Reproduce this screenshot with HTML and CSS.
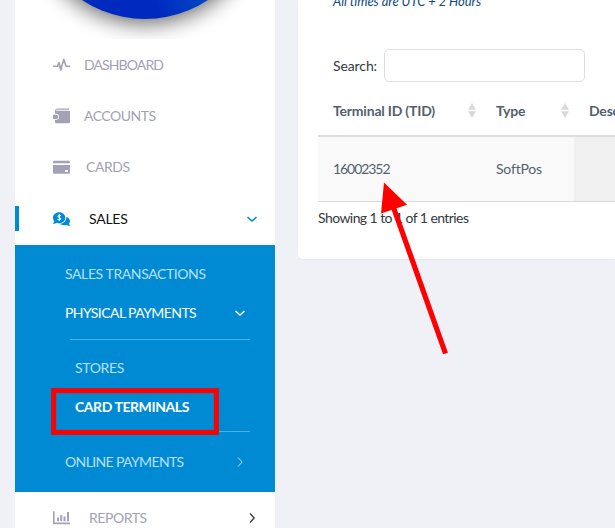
FILE: index.html
```html
<!DOCTYPE html>
<html lang="en">
<head>
<meta charset="utf-8">
<title>Card Terminals</title>
<link rel="stylesheet" href="styles.css">
</head>
<body>
<div class="layout">
  <aside class="sidebar">
    <div class="brand">
      <svg width="260" height="39" viewBox="0 0 260 39">
        <defs>
          <linearGradient id="ball" gradientUnits="userSpaceOnUse" x1="125" y1="10" x2="205" y2="-25"><stop offset=".2" stop-color="#002abf"/><stop offset="1" stop-color="#0057c9"/></linearGradient>
          <filter id="soft" filterUnits="userSpaceOnUse" x="-50" y="-270" width="360" height="360"><feGaussianBlur stdDeviation="11"/></filter>
        </defs>
        <circle cx="130" cy="-91" r="114" fill="#000" opacity=".62" filter="url(#soft)"/>
        <circle cx="130" cy="-95" r="114" fill="url(#ball)"/>
      </svg>
    </div>
    <nav>
      <a class="item dashboard"><svg class="icon" viewBox="0 0 18 16"><path d="M0 9.200H4.500L6 5.500 7.700 13 10.800 2.200 13 9.200H17" fill="none" stroke="currentColor" stroke-width="1.600" stroke-linejoin="round"/></svg><span class="label">DASHBOARD</span></a>
      <a class="item accounts"><svg class="icon" viewBox="0 0 18 16"><path d="M2.500 1.500 4 .500h12v1.200H3.200v1.100H16q1 0 1 1V14q0 1.300-1.300 1.300H3.500Q2 15.300 2 14v-2.200h1a3 3 0 0 0 0-6H2V2.500z" fill="currentColor"/><path d="M0 6.800h3.200a2.100 2.100 0 0 1 0 4.200H0z" fill="currentColor"/></svg><span class="label">ACCOUNTS</span></a>
      <a class="item cards"><svg class="icon" viewBox="0 0 18 16"><path d="M1.500 1.800h14Q17 1.800 17 3.200v1H0v-1q0-1.400 1.500-1.400zM0 6h17v7.200q0 1.500-1.500 1.500h-14Q0 14.700 0 13.200zm12 5v2h3v-2z" fill="currentColor" fill-rule="evenodd"/></svg><span class="label">CARDS</span></a>
      <a class="item sales"><svg class="icon" viewBox="0 0 18 16"><path d="M6.200 1.200c3.400 0 6.100 2.400 6.100 5.500s-2.700 5.500-6.100 5.500q-1.500 0-2.700-.5Q2 13 0 13q1.200-1.300 1.200-2.800Q0 8.700 0 6.700c0-3.100 2.800-5.500 6.200-5.500z" fill="currentColor"/><path d="M13.300 6c2.200.5 3.700 2.100 3.700 4.100q0 1.400-.9 2.500.1 1.300 1 2.300-2 0-3.300-1-1.200.4-2.400.4-2.900 0-4.300-1.500c3.500-.3 6.400-2.900 6.200-6.800z" fill="currentColor"/><path d="M8 4.700q-3-1.200-3.200.4c0 1.800 3.100 1 3 2.800Q7.600 9.600 4.500 8.500M6.300 3v7" fill="none" stroke="#fff" stroke-width="1"/></svg><span class="label">SALES</span><svg class="caret" viewBox="0 0 12 12"><path d="m1.500 4 4.500 4 4.500-4" /></svg></a>
      <div class="submenu">
        <a class="sub transactions"><span class="label">SALES TRANSACTIONS</span></a>
        <a class="sub open physical"><span class="label">PHYSICAL PAYMENTS</span><svg class="caret" viewBox="0 0 12 12"><path d="m1.500 4 4.500 4 4.500-4"/></svg></a>
        <div class="nested">
          <a class="sub stores"><span class="label">STORES</span></a>
          <a class="sub terminals"><span class="label">CARD TERMINALS</span></a>
        </div>
        <a class="sub online"><span class="label">ONLINE PAYMENTS</span><svg class="caret" viewBox="0 0 12 12"><path d="m4 1.500 4.200 4.500L4 10.500"/></svg></a>
      </div>
      <a class="item reports"><svg class="icon" viewBox="0 0 18 16"><path d="M.8 1.200v12.200H17" fill="none" stroke="currentColor" stroke-width="1.600"/><path d="M5 7.500v3.800M8.200 5v6.300M11.500 6.500v4.800M15 2v9.300" fill="none" stroke="currentColor" stroke-width="2"/></svg><span class="label">REPORTS</span><svg class="caret" viewBox="0 0 12 12"><path d="m4 1.500 4.200 4.500L4 10.500"/></svg></a>
    </nav>
  </aside>
  <main class="panel">
    <p class="note"><span>All times are UTC + 2 Hours</span></p>
    <label class="search"><span class="search-text">Search:</span><input type="text"></label>
    <div class="table">
      <div class="row head">
        <div class="cell"><span class="tid">Terminal ID (TID)</span><svg class="sort" viewBox="0 0 8 15"><path d="M0 6.700 4 0l4 6.700zM0 8.300h8L4 15z"/></svg></div>
        <div class="cell"><span class="type">Type</span><svg class="sort" viewBox="0 0 8 15"><path d="M0 6.700 4 0l4 6.700zM0 8.300h8L4 15z"/></svg></div>
        <div class="cell"><span class="desc">Description</span></div>
      </div>
      <div class="row body">
        <div class="cell"><span class="number">16002352</span></div>
        <div class="cell"><span class="pos">SoftPos</span></div>
        <div class="cell sorted"></div>
      </div>
    </div>
    <p class="info"><span>Showing 1 to 1 of 1 entries</span></p>
  </main>
</div>
<div class="highlight"></div>
<svg class="arrow" width="80" height="180" viewBox="375 178 80 180"><path d="m445.500 353.500-52-146" stroke="#f00" stroke-width="5.200"/><path d="m384 182.500 23 22.300-26 8.700z" fill="#f00"/></svg>
</body>
</html>
```
FILE: styles.css
```css
* { box-sizing: border-box; }
body {
  margin: 0;
  height: 528px;
  overflow: hidden;
  background: #f0f1f6;
  font: 14px/20px Lato, "Open Sans", sans-serif;
  color: #343a40;
}
.layout { display: flex; align-items: flex-start; gap: 23px; padding-left: 15px; height: 528px; overflow: hidden; }
.sidebar { flex: 0 0 260px; height: 528px; overflow: hidden; background: #fff; }
.brand { height: 39px; overflow: hidden; }
.brand svg { display: block; }
.label { white-space: nowrap; }
.item { display: flex; align-items: center; height: 51px; padding: 0 17px 0 38px; color: #a2a1b5; }
.icon { width: 18px; height: 16px; flex: none; margin-right: 13px; }
.cards .icon { margin-right: 15px; }
.sales .icon, .reports .icon { margin-right: 18px; }
.caret { width: 12px; height: 12px; margin-left: auto; fill: none; stroke: currentColor; stroke-width: 1.6; }
.item.sales {
  height: 53px;
  color: #008ad4;
  background: linear-gradient(#008ad4, #008ad4) 0 14px / 4px 25px no-repeat;
}
.sales .label { color: #111; }
.reports .caret { color: #333; stroke-width: 1.2; }
.submenu { height: 247px; padding: 9px 25px 0 50px; background: #008ad4; color: #b9e0f4; }
.sub { display: flex; align-items: center; height: 39px; }
.submenu > .sub { padding-right: 4px; }
.sub.open, .terminals { color: #fff; }
.terminals { font-weight: 700; }
.online .caret { stroke-width: 1; }
.nested { margin: 7px 0 10px 5px; padding: 8px 5px 5px; height: 93px; border: solid #4db0e3; border-width: 1px 0; }
.online { height: 40px; }

.dashboard .label { letter-spacing: -.88px; }
.accounts .label { letter-spacing: -.5px; }
.cards .label { letter-spacing: -.45px; }
.sales .label { letter-spacing: -.25px; }
.transactions .label { letter-spacing: -.4px; }
.physical .label { letter-spacing: -.57px; }
.stores .label { letter-spacing: -.35px; }
.terminals .label { letter-spacing: -.43px; }
.online .label { letter-spacing: -.62px; }
.reports .label { letter-spacing: -.45px; }

.panel { flex: 1; min-width: 0; height: 259px; overflow: hidden; padding: 0 0 0 20px; background: #fff; border-radius: 0 0 0 5px; box-shadow: 0 1px 3px #0000000a; }
.note { margin: -9px 0 0 15px; height: 20px; font-size: 13px; font-style: italic; color: #124a7c; letter-spacing: -.06px; }
.search { display: flex; align-items: center; margin: 38px 0 0 15px; height: 33px; }
.search-text { width: 51px; white-space: nowrap; letter-spacing: -.1px; }
.search input { width: 201px; height: 33px; border: 1px solid #dbdfe1; border-radius: 5px; background: #fff; }
.row { display: grid; grid-template-columns: 163px 93px 1fr; color: #53616f; }
.cell { display: flex; align-items: center; padding: 0 5px 0 15px; white-space: nowrap; overflow: hidden; }
.head { height: 55px; padding-top: 4px; border-bottom: 2px solid #dcdddd; font-weight: 700; }
.head .cell { letter-spacing: -.2px; }
.number { letter-spacing: -1.06px; }
.pos { letter-spacing: -.2px; }
.sort { width: 8px; height: 15px; margin-left: auto; fill: #d9dadb; }
.body { height: 65px; background: #f9f9f9; border-bottom: 1px solid #d9dadb; }
.sorted { background: #f0f0f0; }
.info { margin: 6px 0 0; letter-spacing: -.57px; }
.highlight { position: absolute; left: 51px; top: 388px; width: 168px; height: 47px; border: 5px solid #f00; outline: 1px solid #a3274799; outline-offset: -1px; box-shadow: inset 0 0 0 1px #a3274733; }
.arrow { position: absolute; left: 375px; top: 178px; }
```
